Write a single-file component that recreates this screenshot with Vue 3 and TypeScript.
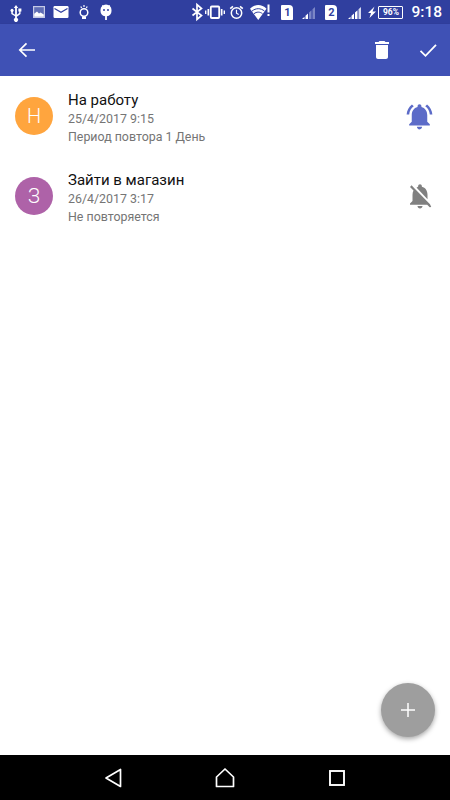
<script setup lang="ts">
interface Reminder {
  letter: string
  color: string
  title: string
  date: string
  repeat: string
  active: boolean
}

const reminders: Reminder[] = [
  { letter: 'Н', color: '#ffa53e', title: 'На работу', date: '25/4/2017 9:15', repeat: 'Период повтора 1 День', active: true },
  { letter: 'З', color: '#ae62a8', title: 'Зайти в магазин', date: '26/4/2017 3:17', repeat: 'Не повторяется', active: false },
]
</script>

<template>
  <div class="screen">
    <div class="status">
      <div class="status-left">
        <svg width="20" height="24" viewBox="0 0 20 24" fill="#fff"><path d="M10 5l2.200 3h-1.300v6.800l2.300-1.700V11.500h-.8V8.600h3v2.900h-.9v2.500l-3.600 2.700v1.400a2 2 0 1 1-1.800 0v-1.900L5.300 14v-2.100a1.600 1.600 0 1 1 1.500 0v1.300l2.300 1.600V8H7.800z"/></svg>
        <svg width="20" height="24" viewBox="0 0 20 24"><rect x="4" y="6" width="12" height="12" fill="#c4c9e6"/><rect x="5.200" y="7.200" width="9.600" height="9.600" fill="#5f6db5"/><path d="M5.200 16.800v-3l2.800-2.300 2 2 1.500-1 3.300 2v2.300z" fill="#fff"/></svg>
        <svg width="20" height="24" viewBox="0 0 20 24"><rect x="2.500" y="6" width="15" height="12" rx="1.200" fill="#fff"/><path d="M3.500 8.500l6.500 3.800 6.500-3.800" fill="none" stroke="#303f9f" stroke-width="1.200"/></svg>
        <svg width="20" height="24" viewBox="0 0 20 24" fill="none" stroke="#fff"><circle cx="10" cy="12.500" r="3.800" stroke-width="1.500"/><path d="M8 16.500h4V19H8z" fill="#fff" stroke="none"/><path d="M6.800 6.500l.8 1.500M13.200 6.500l-.8 1.500M10 5v2" stroke-width="1.200"/></svg>
        <svg width="20" height="24" viewBox="0 0 20 24" fill="#fff"><path d="M4.500 10a5.500 5.500 0 0 1 11 0v1a5.500 5.500 0 0 1-4.600 5.300V20H9.100v-3.700A5.500 5.500 0 0 1 4.500 11z"/><path d="M6.500 5l1.200 2M13.500 5l-1.200 2" stroke="#fff"/><circle cx="8" cy="10" r="1" fill="#303f9f"/><circle cx="12" cy="10" r="1" fill="#303f9f"/></svg>
      </div>
      <div class="status-right">
        <svg width="14" height="24" viewBox="0 0 14 24" fill="none" stroke="#fff" stroke-width="1.700"><path d="M2.500 8.500l9 7-4.500 3.800V4.700l4.500 3.800-9 7"/></svg>
        <svg width="22" height="24" viewBox="0 0 22 24"><rect x="6.800" y="6.500" width="8.400" height="11.500" rx="1" fill="none" stroke="#fff" stroke-width="1.800"/><path d="M3.500 9h1.700v6.500H3.500zM16.800 9h1.700v6.500h-1.700zM1 10.500h1.400v3.500H1zM19.600 10.500H21v3.500h-1.400z" fill="#fff"/></svg>
        <svg width="22" height="24" viewBox="0 0 22 24" fill="none" stroke="#fff"><circle cx="10.500" cy="13" r="5.200" stroke-width="1.500"/><path d="M10.500 9.800v3.400l2.200 1.300" stroke-width="1.200"/><path d="M4.200 8.700l2.800-2.400M16.800 8.700L14 6.300" stroke-width="1.600"/></svg>
        <svg width="26" height="24" viewBox="0 0 26 24"><path d="M2 8.700c4.700-4.800 11.800-4.800 16.500 0L10.250 20z" fill="#fff"/><path d="M4 11.100c3.700-3.200 8.800-3.200 12.500 0M6 13.700c2.600-2.100 5.900-2.100 8.500 0" stroke="#303f9f" fill="none"/><path d="M19.500 4.500h2v8h-2zM19.500 14h2v2h-2z" fill="#fff"/></svg>
        <div class="sim">1</div>
        <svg width="18" height="24" viewBox="0 0 18 24"><path d="M2 19l2.500-2.300V19zM5.500 15.750L8 13.400V19H5.500z" fill="#fff"/><path d="M9 12.500l2.500-2.300V19H9zM12.500 9.250L15 6.900V19h-2.500z" fill="#7b86c6"/></svg>
        <div class="sim">2</div>
        <svg class="sig2" width="18" height="24" viewBox="0 0 18 24"><path d="M2 19l2.500-2.300V19zM5.500 15.750L8 13.400V19H5.500zM9 12.500l2.500-2.300V19H9z" fill="#fff"/><path d="M12.500 9.250L15 6.900V19h-2.500z" fill="#d5d9ef"/></svg>
        <svg class="bolt" width="11" height="24" viewBox="0 0 11 24"><path d="M8.500 6.500L2 13h3l-1.500 5L10 11.500H6.500z" fill="#fff"/></svg>
        <div class="battery">96%</div>
        <span class="time">9:18</span>
      </div>
    </div>

    <header class="toolbar">
      <svg class="back" width="24" height="24" viewBox="0 0 24 24" fill="none" stroke="#fff" stroke-width="1.700"><path d="M20 12H5M11.500 5.300L4.800 12l6.700 6.700"/></svg>
      <div class="actions">
        <svg width="24" height="24" viewBox="0 0 24 24" fill="#fff"><path d="M6 19c0 1.100.9 2 2 2h8c1.100 0 2-.9 2-2V7H6v12zM19 4h-3.500l-1-1h-5l-1 1H5v2h14V4z"/></svg>
        <svg width="24" height="24" viewBox="0 0 24 24" fill="none" stroke="#fff" stroke-width="1.800"><path d="M4.500 12.800l5 5L20 6.800"/></svg>
      </div>
    </header>

    <main class="content">
      <ul class="list">
        <li v-for="r in reminders" :key="r.title" class="row">
          <div class="avatar" :style="{ background: r.color }">{{ r.letter }}</div>
          <div class="text">
            <div class="title">{{ r.title }}</div>
            <div class="sub">{{ r.date }}</div>
            <div class="sub">{{ r.repeat }}</div>
          </div>
          <svg v-if="r.active" class="bell" width="31" height="31" viewBox="0 0 24 24" fill="#5c6bc8"><path d="M7.580 4.080L6.150 2.650C3.750 4.480 2.170 7.300 2.030 10.500h2c.15-2.650 1.510-4.970 3.550-6.420zm12.390 6.420h2c-.15-3.200-1.730-6.020-4.120-7.850l-1.420 1.430c2.020 1.450 3.390 3.770 3.540 6.420zM18 11c0-3.070-1.640-5.640-4.500-6.320V4c0-.83-.67-1.500-1.500-1.500s-1.500.67-1.500 1.500v.68C7.630 5.360 6 7.920 6 11v5l-2 2v1h16v-1l-2-2v-5zm-6 11c.14 0 .27-.01.4-.04.65-.14 1.180-.58 1.440-1.180.1-.24.15-.5.15-.78h-4c.01 1.100.9 2 2.010 2z"/></svg>
          <svg v-else class="bell" width="30" height="30" viewBox="0 0 24 24" fill="#808080"><path d="M20 18.690L7.840 6.140 5.270 3.490 4 4.760l2.800 2.800v.01c-.52.99-.8 2.160-.8 3.420v5l-2 2v1h13.730l2 2L21 20.730l-1-2.040zM12 22c1.110 0 2-.89 2-2h-4c0 1.110.89 2 2 2zm6-7.320V11c0-3.080-1.640-5.640-4.500-6.320V4c0-.83-.67-1.500-1.500-1.500s-1.500.67-1.500 1.500v.68c-.15.03-.29.08-.42.12-.1.03-.2.07-.3.11h-.01c-.2.08-.4.17-.59.27-.01 0-.01 0-.02.01L18 14.680z"/></svg>
        </li>
      </ul>
      <button class="fab" type="button">
        <svg width="24" height="24" viewBox="0 0 24 24" stroke="#fff" stroke-width="1.500"><path d="M12 5v14M5 12h14"/></svg>
      </button>
    </main>

    <nav class="nav">
      <svg width="32" height="32" viewBox="0 0 32 32" fill="none" stroke="#fff" stroke-width="1.700"><path d="M23.500 7.500v17L9 16z" stroke-linejoin="round"/></svg>
      <svg width="32" height="32" viewBox="0 0 32 32" fill="none" stroke="#fff" stroke-width="1.700"><path d="M7.500 24.500V15L16 7l8.500 8v9.500z" stroke-linejoin="round"/></svg>
      <svg width="32" height="32" viewBox="0 0 32 32" fill="none" stroke="#fff" stroke-width="1.900"><rect x="9" y="9" width="14" height="14"/></svg>
    </nav>
  </div>
</template>

<style>
html, body { margin: 0; background: #fff; }
</style>

<style scoped>
.screen {
  display: flex;
  flex-direction: column;
  width: 450px;
  height: 800px;
  overflow: hidden;
  font-family: Roboto, "Noto Sans", sans-serif;
}
.status {
  display: flex;
  justify-content: space-between;
  height: 24px;
  flex: none;
  padding-left: 6px;
  padding-right: 8px;
  background: #303f9f;
}
.status-left { display: flex; gap: 2.5px; }
.status-right { display: flex; align-items: center; }
.status svg { display: block; }
.sim {
  width: 12px;
  height: 15px;
  margin: 0 7px;
  border-radius: 1px 4px 1px 1px;
  background: #fff;
  color: #303f9f;
  font-size: 11px;
  font-weight: 700;
  line-height: 16px;
  text-align: center;
}
.sig2 { margin-left: 2px; }
.bolt { margin-left: 2px; }
.battery {
  width: 25px;
  height: 13px;
  margin-left: 1px;
  border: 1px solid #fff;
  border-radius: 1px;
  box-sizing: border-box;
  color: #fff;
  font-size: 8.500px;
  font-weight: 700;
  line-height: 11px;
  text-align: center;
}
.time {
  margin-left: 8px;
  color: #fff;
  font-size: 15.500px;
  font-weight: 500;
}
.toolbar {
  display: flex;
  justify-content: space-between;
  align-items: center;
  height: 52px;
  flex: none;
  padding: 0 10px 0 15px;
  background: #3f51b5;
  box-shadow: 0 1px 2px rgba(0, 0, 0, 0.3);
  position: relative;
}
.actions { display: flex; gap: 22px; }
.toolbar svg { display: block; }
.content {
  flex: 1;
  position: relative;
  background: #fff;
}
.list { list-style: none; margin: 0; padding: 0; }
.row {
  display: flex;
  align-items: center;
  height: 80px;
  padding: 0 15px;
}
.avatar {
  width: 38px;
  height: 38px;
  flex: none;
  margin-right: 15px;
  border-radius: 50%;
  color: #fff;
  font-size: 20px;
  font-weight: 300;
  line-height: 38px;
  text-align: center;
}
.text { flex: 1; padding-top: 5px; }
.title {
  color: #111;
  font-size: 15px;
  line-height: 19px;
}
.sub {
  color: #757575;
  font-size: 12.400px;
  line-height: 18px;
}
.bell { flex: none; }
.fab {
  position: absolute;
  right: 15.500px;
  bottom: 18px;
  display: flex;
  align-items: center;
  justify-content: center;
  width: 54px;
  height: 54px;
  padding: 0;
  border: 0;
  border-radius: 50%;
  background: #9e9e9e;
  box-shadow: 0 2px 5px rgba(0, 0, 0, 0.35);
}
.nav {
  display: flex;
  align-items: center;
  gap: 80px;
  height: 45px;
  flex: none;
  padding-left: 97px;
  background: #000;
}
</style>
